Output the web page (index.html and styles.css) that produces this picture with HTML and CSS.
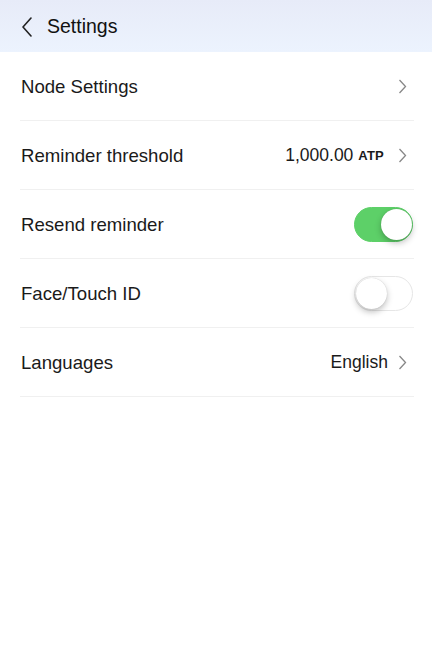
FILE: index.html
```html
<!DOCTYPE html>
<html>
<head>
<meta charset="utf-8">
<link rel="stylesheet" href="styles.css">
</head>
<body>
<header class="topbar">
  <svg class="back" width="12" height="20" viewBox="0 0 12 20"><path d="M10 1 L2 10 L10 19" fill="none" stroke="#222" stroke-width="1.6" stroke-linecap="round" stroke-linejoin="round"/></svg>
  <span class="title">Settings</span>
</header>
<main class="list">
  <div class="row">
    <span class="label">Node Settings</span>
    <span class="right"><svg class="chev" width="9" height="15" viewBox="0 0 9 15"><path d="M1.5 1 L7.5 7.5 L1.5 14" fill="none" stroke="#888" stroke-width="1.3"/></svg></span>
  </div>
  <div class="row">
    <span class="label">Reminder threshold</span>
    <span class="right"><span class="value">1,000.00</span><span class="unit">ATP</span><svg class="chev" width="9" height="15" viewBox="0 0 9 15"><path d="M1.5 1 L7.5 7.5 L1.5 14" fill="none" stroke="#888" stroke-width="1.3"/></svg></span>
  </div>
  <div class="row">
    <span class="label">Resend reminder</span>
    <span class="toggle on"><span class="knob"></span></span>
  </div>
  <div class="row">
    <span class="label">Face/Touch ID</span>
    <span class="toggle"><span class="knob"></span></span>
  </div>
  <div class="row">
    <span class="label">Languages</span>
    <span class="right"><span class="value">English</span><svg class="chev" width="9" height="15" viewBox="0 0 9 15"><path d="M1.5 1 L7.5 7.5 L1.5 14" fill="none" stroke="#888" stroke-width="1.3"/></svg></span>
  </div>
</main>
</body>
</html>
```
FILE: styles.css
```css
* { box-sizing: border-box; }
html, body { margin: 0; padding: 0; background: #fff; }
body { font-family: "Liberation Sans", Arial, sans-serif; color: #1a1a1a; width: 432px; height: 649px; }
.topbar {
  height: 52px;
  background: linear-gradient(#e7ebf8, #ecf3fe);
  display: flex;
  align-items: center;
  padding-left: 21px;
  padding-top: 1px;
}
.back { margin-right: 14px; }
.title { font-size: 19.5px; color: #111; }
.list { padding: 0 18px 0 20px; }
.row {
  height: 69px;
  border-bottom: 1px solid #f0f0f0;
  display: flex;
  align-items: center;
  justify-content: space-between;
  padding-left: 1px;
  padding-top: 1px;
}
.label { font-size: 18.6px; }
.right { display: flex; align-items: center; }
.value { font-size: 17.5px; }
.unit { font-size: 13px; font-weight: bold; margin-left: 5px; letter-spacing: 0.2px; }
.chev { margin-left: 10px; margin-right: 7px; }
.unit + .chev { margin-left: 14px; }
.toggle {
  width: 59px; height: 35px; border-radius: 18px;
  background: #fff;
  border: 1.5px solid #e6e6e6;
  position: relative;
  margin-right: 1px;
}
.toggle .knob {
  position: absolute; top: 0.5px; left: 0.5px;
  width: 31px; height: 31px; border-radius: 50%;
  background: #fff;
  box-shadow: 0 3px 6px rgba(0,0,0,0.25), 0 0 1px rgba(0,0,0,0.2);
}
.toggle.on { background: #5dd068; border-color: #5dd068; }
.toggle.on .knob { left: auto; right: 0.5px; }
```
